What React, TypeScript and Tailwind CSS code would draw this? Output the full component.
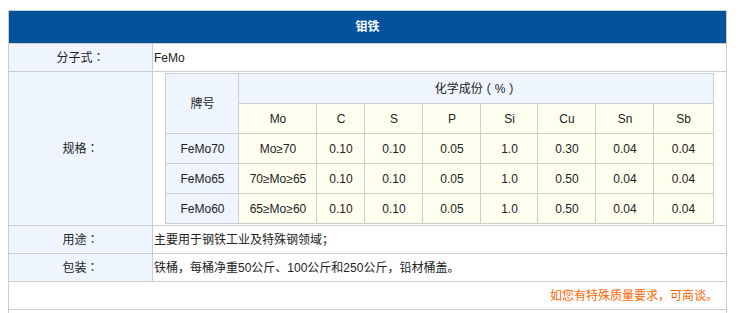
const cols = [73, 78, 48, 58, 58, 57, 58, 58, 59];
const heads = ["Mo", "C", "S", "P", "Si", "Cu", "Sn", "Sb"];
const rows = [
  ["FeMo70", "Mo≥70", "0.10", "0.10", "0.05", "1.0", "0.30", "0.04", "0.04"],
  ["FeMo65", "70≥Mo≥65", "0.10", "0.10", "0.05", "1.0", "0.50", "0.04", "0.04"],
  ["FeMo60", "65≥Mo≥60", "0.10", "0.10", "0.05", "1.0", "0.50", "0.04", "0.04"],
];

// label with a centred full-width colon, as in the screenshot
const Label = ({ text }: { text: string }) => (
  <>
    {text}
    <span className="font-['Noto_Sans_CJK_JP',sans-serif]">：</span>
  </>
);

// full-width bracket, glyph centred in its em box
const Paren = ({ ch }: { ch: string }) => (
  <span className="inline-block w-[12px] text-center [font-feature-settings:'hwid']">{ch}</span>
);

const SpecTable = () => (
  <table className="table-fixed border-collapse w-[548px] mx-auto my-[1px]">
    <colgroup>
      {cols.map((w, i) => (
        <col key={i} style={{ width: w }} />
      ))}
    </colgroup>
    <tbody>
      <tr className="h-[30px]">
        <td rowSpan={2} className="border border-[#cccccc] bg-[#eef5fe] text-center">
          牌号
        </td>
        <td colSpan={8} className="border border-[#cccccc] bg-[#eef5fe] text-center">
          化学成份<Paren ch="（" />%<Paren ch="）" />
        </td>
      </tr>
      <tr className="h-[30px]">
        {heads.map((h) => (
          <td key={h} className="border border-[#cccccc] bg-[#fffff0] text-center">
            {h}
          </td>
        ))}
      </tr>
      {rows.map((r) => (
        <tr key={r[0]} className="h-[30px]">
          {r.map((c, i) => (
            <td
              key={i}
              className={
                "border border-[#cccccc] text-center " +
                (i === 0 ? "bg-[#eef5fe]" : "bg-[#fffff0]")
              }
            >
              {c}
            </td>
          ))}
        </tr>
      ))}
    </tbody>
  </table>
);

export default function App() {
  return (
    <div className="bg-white w-[750px] h-[313px] overflow-hidden pt-[10px] pl-[8px] text-[12px] text-[#222222] font-['Liberation_Sans','Noto_Sans_CJK_SC',sans-serif]">
      <table className="table-fixed border-collapse w-[719px]">
        <colgroup>
          <col className="w-[144px]" />
          <col />
        </colgroup>
        <tbody>
          <tr className="h-[33px]">
            <td colSpan={2} className="border border-[#cccccc] bg-[#02539b] text-white font-bold text-center">
              钼铁
            </td>
          </tr>
          <tr className="h-[28px]">
            <td className="border border-[#cccccc] bg-[#eef5fe] text-center">
              <Label text="分子式" />
            </td>
            <td className="border border-[#cccccc] pl-[1px]">FeMo</td>
          </tr>
          <tr className="h-[154px]">
            <td className="border border-[#cccccc] bg-[#eef5fe] text-center">
              <Label text="规格" />
            </td>
            <td className="border border-[#cccccc] p-0">
              <SpecTable />
            </td>
          </tr>
          <tr className="h-[28px]">
            <td className="border border-[#cccccc] bg-[#eef5fe] text-center">
              <Label text="用途" />
            </td>
            <td className="border border-[#cccccc] pl-[1px]">主要用于钢铁工业及特殊钢领域；</td>
          </tr>
          <tr className="h-[28px]">
            <td className="border border-[#cccccc] bg-[#eef5fe] text-center">
              <Label text="包装" />
            </td>
            <td className="border border-[#cccccc] pl-[1px]">
              铁桶，每桶净重50公斤、100公斤和250公斤，铅材桶盖。
            </td>
          </tr>
          <tr className="h-[28px]">
            <td colSpan={2} className="border border-[#cccccc] text-right pr-[8px] text-[#ff6600]">
              如您有特殊质量要求，可商谈。
            </td>
          </tr>
          <tr className="h-[28px]">
            <td colSpan={2} className="border border-[#cccccc]"></td>
          </tr>
        </tbody>
      </table>
    </div>
  );
}
